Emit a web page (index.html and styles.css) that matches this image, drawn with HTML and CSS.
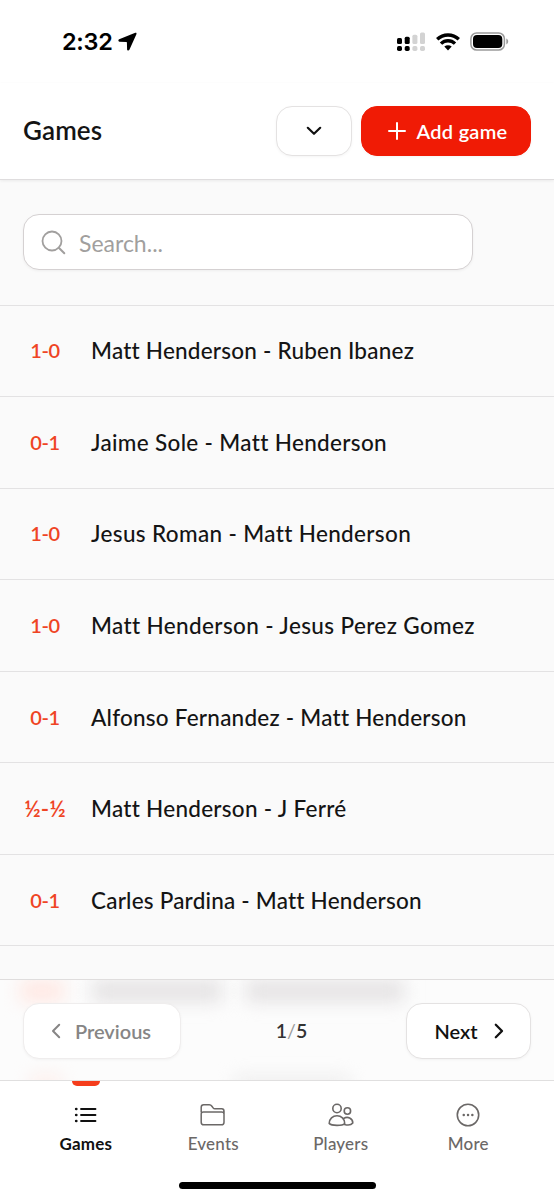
FILE: index.html
```
<!DOCTYPE html>
<html lang="en">
<head>
<meta charset="utf-8">
<title>Games</title>
<link rel="stylesheet" href="styles.css">
</head>
<body>
<div class="status">
  <div class="clock"><span class="time">2:32</span><svg width="19" height="19" viewBox="0 0 19 19"><path d="M17.3.8 1.200 7.300C0 7.800.1 9.600 1.400 9.700l7 .3c.3 0 .5.200.5.500l.2 6.900c.1 1.400 1.800 1.500 2.300.3L18.400 2.300C18.800 1.200 18.300.400 17.300.8z"/></svg></div>
  <div class="signals">
    <svg width="28" height="20" viewBox="0 0 28 20"><g><rect x="0" y="6" width="5" height="6" rx="1.500"/><rect x="7.700" y="4.800" width="5" height="7.200" rx="1.500"/><rect x="0" y="14" width="5" height="5" rx="1.700"/><rect x="7.700" y="14" width="5" height="5" rx="1.700"/></g><g fill="#d3d3d3"><rect x="15.400" y="2.800" width="5" height="9.200" rx="1.500"/><rect x="23" y=".5" width="5" height="11.500" rx="1.500"/><rect x="15.400" y="14" width="5" height="5" rx="1.700"/><rect x="23" y="14" width="5" height="5" rx="1.700"/></g></svg>
    <svg width="24" height="18" viewBox="0 0 24 18"><g fill="none" stroke="#000" stroke-width="3.400"><path d="M1.200 6.200C7.200.5 16.800.5 22.800 6.200"/><path d="M5 10.600c4-3.900 10-3.900 14 0"/></g><path d="M8.300 13.600c2.200-1.800 5.200-1.800 7.400 0L12 17.600z"/></svg>
    <svg width="39" height="19" viewBox="0 0 39 19"><rect x=".9" y=".9" width="33.500" height="17.200" rx="5.800" fill="none" stroke="#9a9a9a" stroke-width="1.500"/><rect x="3" y="3" width="29.300" height="13" rx="4"/><path d="M36.300 6.600c2.500.8 2.500 5 0 5.800z" fill="#9a9a9a"/></svg>
  </div>
</div>
<header class="header">
  <h1 class="title">Games</h1>
  <button class="btn toggle"><svg class="ico" width="16" height="10" viewBox="0 0 16 10"><path d="m1.800 1.800 6.200 6 6.200-6" stroke-width="2.200"/></svg></button>
  <button class="btn add"><svg class="ico" width="18" height="18" viewBox="0 0 18 18"><path d="M9 1v16M1 9h16" stroke-width="2"/></svg><span class="add-label">Add game</span></button>
</header>
<main class="content">
  <div class="searchwrap"><div class="search"><svg class="ico" width="25" height="25" viewBox="0 0 25 25"><circle cx="11" cy="11" r="9.500" stroke-width="1.800"/><path d="m17.800 17.800 5.500 5.500" stroke-width="2"/></svg><span>Search...</span></div></div>
  <div class="row"><span class="result">1-0</span><span class="name r1">Matt Henderson - Ruben Ibanez</span></div>
  <div class="row"><span class="result">0-1</span><span class="name r2">Jaime Sole - Matt Henderson</span></div>
  <div class="row"><span class="result">1-0</span><span class="name r3">Jesus Roman - Matt Henderson</span></div>
  <div class="row"><span class="result">1-0</span><span class="name r4">Matt Henderson - Jesus Perez Gomez</span></div>
  <div class="row"><span class="result">0-1</span><span class="name r5">Alfonso Fernandez - Matt Henderson</span></div>
  <div class="row"><span class="result half">½-½</span><span class="name r6">Matt Henderson - J Ferré</span></div>
  <div class="row"><span class="result">0-1</span><span class="name r7">Carles Pardina - Matt Henderson</span></div>
  <div class="rest"></div>
</main>
<div class="pager">
  <i class="haze haze-score"></i><i class="haze haze-left"></i><i class="haze haze-right"></i><i class="haze haze-low-score"></i><i class="haze haze-low"></i>
  <button class="btn prev"><svg class="ico" width="10" height="16" viewBox="0 0 10 16"><path d="M8.200 1.800 2 8l6.200 6.200" stroke-width="2"/></svg><span>Previous</span></button>
  <div class="page"><span>1</span><span class="slash">/</span><span>5</span></div>
  <button class="btn next"><span>Next</span><svg class="ico" width="10" height="16" viewBox="0 0 10 16"><path d="M1.800 1.800 8 8l-6.200 6.200" stroke-width="2.300"/></svg></button>
</div>
<nav class="tabs">
  <div class="tab active"><svg class="ico" width="26" height="26" viewBox="0 0 26 26"><path d="M8 7h14.500M8 13h14.500M8 19h14.500" stroke-width="1.800"/><path d="M3.200 7h.1M3.200 13h.1M3.200 19h.1" stroke-width="2.700"/></svg><span class="t-games">Games</span></div>
  <div class="tab"><svg class="ico" width="26" height="26" viewBox="0 0 26 26"><path d="M1.200 10V5.300c0-1.600 1-2.500 2.500-2.500h5.500c1.300 0 2 .4 2.700 1.400l1.200 1.700c.5.700 1 .9 1.800.9h6.800c1.500 0 2.300.9 2.300 2.400v11c0 1.600-1 2.600-2.600 2.600H3.900c-1.700 0-2.700-1-2.700-2.600V12c0-1.300.9-2 2.200-2h18.200c1.400 0 2.400.8 2.400 2" stroke-width="1.500"/></svg><span class="t-events">Events</span></div>
  <div class="tab"><svg class="ico" width="26" height="26" viewBox="0 0 26 26"><g stroke-width="1.600"><circle cx="9" cy="6.500" r="4.200"/><circle cx="19.400" cy="9" r="3.200"/><path d="M1.200 21.400c0-4.500 3.500-7.700 7.800-7.700s7.700 3.200 7.700 7.700C14.500 24 3.500 24 1.200 21.400zM15.500 16.600c4-2.700 9.300-.5 9.300 4.400-1.500 1.800-5.300 2.200-8.300 1.400"/></g></svg><span class="t-players">Players</span></div>
  <div class="tab"><svg class="ico" width="26" height="26" viewBox="0 0 26 26"><circle cx="13" cy="13" r="10.700" stroke-width="1.600"/><path d="M8.700 13h.1M13 13h.1M17.300 13h.1" stroke-width="2.400"/></svg><span class="t-more">More</span></div>
  <i class="home"></i>
</nav>
</body>
</html>
```
FILE: styles.css
```
* { box-sizing: border-box; }
body { margin: 0; width: 554px; height: 1200px; overflow: hidden; display: flex; flex-direction: column; background: #fff; color: #141414; font-family: Lato, "Open Sans", sans-serif; font-variant-ligatures: none; }
svg { display: block; flex: none; }
.ico { fill: none; stroke: currentColor; stroke-linecap: round; stroke-linejoin: round; }
.status { height: 83px; flex: none; display: flex; justify-content: space-between; padding: 0 45px 0 62px; align-items: center; }
.clock { display: flex; align-items: center; gap: 5px; }
.time { font: 600 23.500px/30px Inter, sans-serif; color: #000; letter-spacing: -.3px; }
.signals { display: flex; align-items: center; gap: 10.500px; }
.header { height: 97px; flex: none; display: flex; align-items: center; padding: 0 23px; border-bottom: 1px solid #dfddde; box-shadow: 0 1px 3px #00000010; z-index: 1; }
.title { margin: 0 auto 0 0; font-size: 26px; line-height: 30px; padding-bottom: 2px; font-weight: 600; letter-spacing: .1px; }
.btn { display: flex; align-items: center; justify-content: center; font: 600 20px/24px Lato, sans-serif; padding: 0; border: 1px solid #e4e2e2; border-radius: 16px; background: #fff; color: #111; box-shadow: 0 1px 3px #0000000b; white-space: nowrap; }
.toggle { width: 76px; height: 50px; margin-right: 9px; }
.add { width: 170px; height: 50px; background: #f01b05; border-color: #f01b05; color: #fff; gap: 11px; padding-left: 3px; }
.add-label { letter-spacing: .25px; }
.content { flex: 1; min-height: 0; background: #fafafa; overflow: hidden; }
.searchwrap { height: 124.500px; padding: 34px 23px; }
.search { width: 450px; height: 56px; border: 1.500px solid #d5d1d2; border-radius: 16px; background: #fff; display: flex; align-items: center; padding-left: 17px; gap: 13px; color: #a19f9e; font-size: 23px; font-weight: 400; box-shadow: 0 1px 3px #0000000d; }
.search span { padding-top: 1px; }
.row { height: 91.570px; border-top: 1.500px solid #e3e2e3; display: flex; align-items: center; padding-left: 23px; }
.result { width: 44px; text-align: center; color: #ef4424; font-size: 20px; font-weight: 600; margin-right: 24px; letter-spacing: -.4px; padding-bottom: 1px; }
.half { font-size: 22.500px; letter-spacing: 0; }
.name { font-size: 22.500px; line-height: 30px; padding-top: 1px; font-weight: 500; white-space: nowrap; }
.r1 { letter-spacing: .22px; }
.r2 { letter-spacing: .33px; }
.r3 { letter-spacing: .35px; }
.r4 { letter-spacing: .37px; }
.r5 { letter-spacing: .23px; }
.r6 { letter-spacing: .27px; }
.r7 { letter-spacing: .21px; }
.rest { border-top: 1px solid #e3e2e3; }
.pager { position: relative; overflow: hidden; height: 102px; flex: none; display: flex; align-items: center; justify-content: space-between; padding: 1px 23px 0; background: #fcfcfc; border-top: 1px solid #dfdddd; border-bottom: 1px solid #e0dfdf; }
.haze { position: absolute; filter: blur(9px); background: #e4e2e3; height: 22px; top: 0; }
.haze-score { left: 20px; width: 44px; background: #ffe8e3; }
.haze-left { left: 92px; width: 130px; }
.haze-right { left: 246px; width: 158px; }
.haze-low-score { left: 30px; width: 32px; height: 10px; top: 97px; background: #ffe8e3; }
.haze-low { left: 234px; width: 116px; height: 10px; top: 98px; background: #e8e7e7; }
.pager .btn { position: relative; height: 56px; }
.prev { width: 158px; gap: 14px; padding-right: 2px; color: #868585; border-color: #efeded; }
.next { width: 125px; gap: 16px; padding-left: 1px; }
.page { display: flex; font-size: 19.500px; font-weight: 600; gap: 0; padding-right: 4px; color: #333; position: relative; }
.slash { color: #999; font-weight: 400; }
.tabs { position: relative; height: 119px; flex: none; display: flex; justify-content: space-between; padding: 21px 22px 0; background: #fff; }
.tab { width: 127.500px; display: flex; flex-direction: column; align-items: center; gap: 5px; color: #6b6867; font-size: 17px; line-height: 22px; font-weight: 500; position: relative; letter-spacing: .2px; }
.active { color: #111; font-weight: 700; }
.active::before { content: ""; position: absolute; top: -21px; width: 28px; height: 5px; border-radius: 0 0 5px 5px; background: #f53d1c; }
.home { position: absolute; left: 179px; bottom: 11px; width: 197px; height: 7px; border-radius: 4px; background: #000; }
```
